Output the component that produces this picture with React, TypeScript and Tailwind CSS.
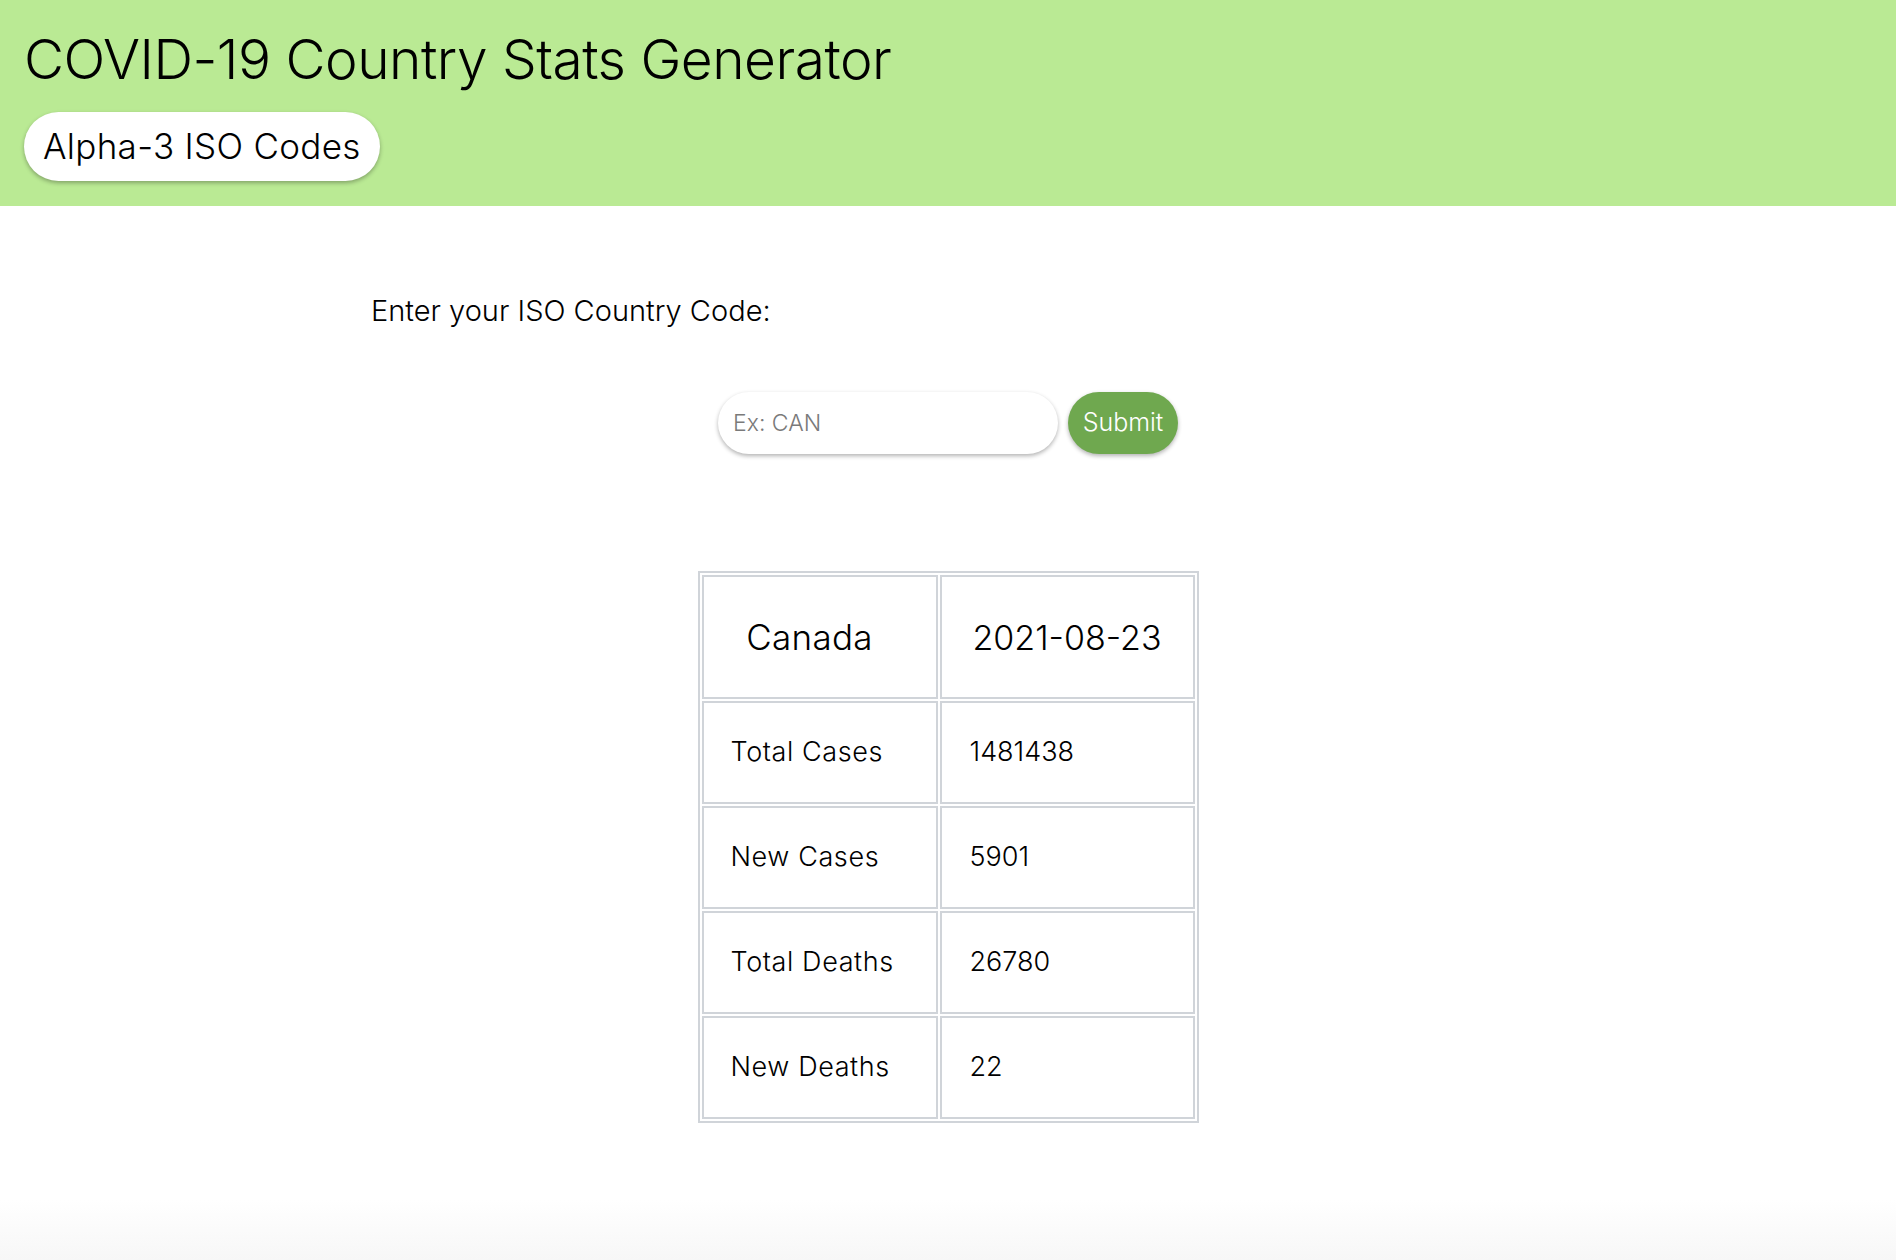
import React, { useState } from "react";

const stats = [
  { label: "Total Cases", value: "1481438" },
  { label: "New Cases", value: "5901" },
  { label: "Total Deaths", value: "26780" },
  { label: "New Deaths", value: "22" },
];

function App() {
  const [code, setCode] = useState("");

  return (
    <div className="min-h-screen flex flex-col bg-white text-black font-['Inter','Liberation_Sans',sans-serif] font-light">
      <div className="h-[206px] bg-[#baea94] pl-[24px] pt-[32px]">
        <h1 className="text-[55px] leading-none font-light tracking-[-0.5px]">
          COVID-19 Country Stats Generator
        </h1>
        <button className="mt-[25px] h-[69px] px-[19px] rounded-full bg-white text-[35px] leading-none font-light tracking-[0.3px] shadow-[0_2px_4px_rgba(0,0,0,0.3)]">
          Alpha-3 ISO Codes
        </button>
      </div>

      <div className="flex-1">
        <p className="mt-[90px] ml-[371px] text-[29px] leading-none font-light">
          Enter your ISO Country Code:
        </p>

        <div className="mt-[67px] flex justify-center gap-[10px]">
          <input
            value={code}
            onChange={(e) => setCode(e.target.value)}
            placeholder="Ex: CAN"
            className="w-[340px] h-[62px] rounded-full bg-white px-[15px] text-[23px] font-light outline-none placeholder:text-[#7a7a7a] shadow-[0_2px_4px_rgba(0,0,0,0.3)]"
          />
          <button className="w-[110px] h-[62px] rounded-full bg-[#6fa84f] text-white text-[25px] font-light shadow-[0_2px_4px_rgba(0,0,0,0.3)]">
            Submit
          </button>
        </div>

        <div className="mt-[117px] flex justify-center">
          <table className="w-[501px] border-separate border-spacing-[2px] border-2 border-[#d0d4d9]">
            <thead>
              <tr>
                <th className="w-[236px] h-[124px] border-2 border-[#d0d4d9] pr-[20px] text-[35px] font-light text-center tracking-[0.3px]">
                  Canada
                </th>
                <th className="h-[124px] border-2 border-[#d0d4d9] text-[34px] font-light text-center">
                  2021-08-23
                </th>
              </tr>
            </thead>
            <tbody>
              {stats.map((s) => (
                <tr key={s.label}>
                  <td className="h-[103px] border-2 border-[#d0d4d9] pl-[27px] text-[27px] tracking-[0.6px]">
                    {s.label}
                  </td>
                  <td className="h-[103px] border-2 border-[#d0d4d9] pl-[28px] text-[27px]">
                    {s.value}
                  </td>
                </tr>
              ))}
            </tbody>
          </table>
        </div>
      </div>

      <div className="h-[60px] bg-gradient-to-b from-white to-[#f7f7f7]"></div>
    </div>
  );
}

export default App;
